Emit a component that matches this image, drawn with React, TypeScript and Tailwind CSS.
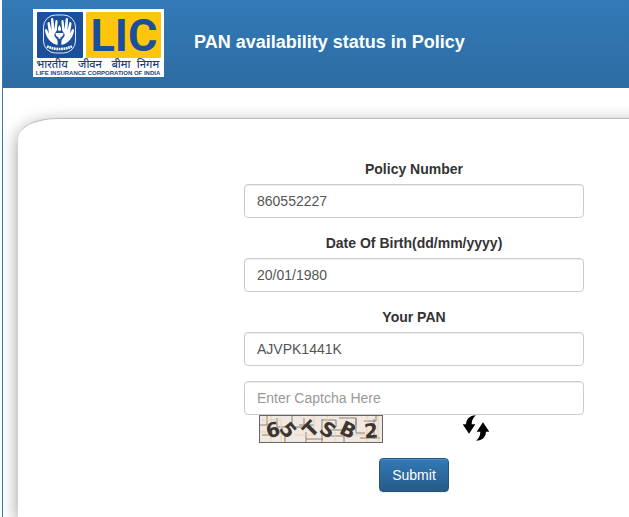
import { clsx } from "clsx";
import { InputHTMLAttributes } from "react";

const sans = "font-['Liberation_Sans',Arial,sans-serif]";

const hindiWords = [
  { word: "भारतीय", x: 19 },
  { word: "जीवन", x: 57 },
  { word: "बीमा", x: 88 },
  { word: "निगम", x: 115 },
];

function LicLogo() {
  return (
    <svg
      viewBox="0 0 131 68"
      className="h-[68px] w-[131px] shrink-0"
      role="img"
      aria-label="LIC">
      <rect width="131" height="68" fill="#fff" />
      {/* Emblem */}
      <rect x="4" y="3" width="46" height="46" rx="1" fill="#1b4f9c" />
      <rect
        x="10.500"
        y="6"
        width="32"
        height="38"
        rx="12"
        fill="#1b4f9c"
        stroke="#dfe8f5"
      />
      <g fill="#fff">
        <path d="M24.500 36C18 34.500 13 29 12 21.500c0-2 1.800-2 2.300-.3l1.700 3.500-1.500-10c0-2 2-2.200 2.400-.3l1.600 7-.5-11c0-2 2.200-2 2.400 0l1 10 1-8c.3-2 2.200-1.800 2.200.2l-.8 8.900-2.300 3.500c-.5 2 .5 3 1.500 4 1.500 1.500 2 4 1.500 7z" />
        <path d="M28.500 36C35 34.500 40 29 41 21.500c0-2-1.800-2-2.300-.3L37 24.700l1.500-10c0-2-2-2.200-2.400-.3l-1.600 7 .5-11c0-2-2.200-2-2.400 0l-1 10-1-8c-.3-2-2.200-1.800-2.200.2l.8 8.900 2.300 3.500c.5 2-.5 3-1.500 4-1.500 1.500-2 4-1.500 7z" />
        <path d="M22.500 24h8c0 2.500-1.500 3.800-3 4.200v1.500h-2v-1.500c-1.500-.4-3-1.700-3-4.200z" />
      </g>
      <path
        d="M26.500 16c1.600 2.500 2 3.800 1.500 5-.6 1.200-2.500 1.200-3 0-.5-1.200-.1-2.500 1.500-5z"
        fill="#fff"
      />
      <path
        d="M14 37.500q12.500 5 25 0"
        fill="none"
        stroke="#fff"
        strokeWidth="2.600"
        strokeDasharray="1.800 .6"
      />
      {/* Wordmark */}
      <rect x="53" y="3" width="75" height="46" rx="1" fill="#fdc60b" />
      <text
        x="91"
        y="42"
        textAnchor="middle"
        fill="#1b4f9c"
        className="font-['Roboto','Liberation_Sans',sans-serif] text-[45px] font-bold">
        LIC
      </text>
      {hindiWords.map(({ word, x }) => (
        <text
          key={word}
          x={x}
          y="59"
          textAnchor="middle"
          fill="#1b3f7f"
          className="font-['Noto_Sans',sans-serif] text-[11px] font-medium">
          {word}
        </text>
      ))}
      <text
        x="65"
        y="66"
        textAnchor="middle"
        fill="#1b3f7f"
        className="font-['Liberation_Sans',Arial,sans-serif] text-[6px] font-bold">
        LIFE INSURANCE CORPORATION OF INDIA
      </text>
    </svg>
  );
}

const captchaChars = [
  { char: "6", x: 14, y: 15, angle: -15 },
  { char: "5", x: 29, y: 15, angle: 50 },
  { char: "T", x: 52, y: 14, angle: -45 },
  { char: "S", x: 69, y: 15, angle: 35 },
  { char: "B", x: 89, y: 15, angle: 25 },
  { char: "2", x: 112, y: 16, angle: -5 },
];

function Captcha() {
  return (
    <svg
      viewBox="0 0 124 28"
      className="h-7 w-[124px]"
      role="img"
      aria-label="Captcha">
      <rect width="124" height="28" fill="#f1e9e1" />
      <path
        d="M8 0v10H0M18 3v9h9M26 20v8M33 0v12h12V3M40 10h15M47 17v11M47 24h17M63 4v24M63 5h14v7M70 15h20M80 3h17v7M97 3v15h9M105 6h12V0M101 23h20M115 4v20M72 21h13v7M3 20h15"
        fill="none"
        stroke="#8c8279"
      />
      <path
        d="M3 5h20M12 0v28M22 6v20M36 20h22M55 0v17M68 0v10M76 17v11M88 20h22M108 0v28M119 0v28M0 17h26"
        fill="none"
        stroke="#e9cfb2"
      />
      <g
        fill="#3d3631"
        textAnchor="middle"
        className="font-['DejaVu_Sans','Liberation_Sans',sans-serif] text-[20px] font-bold">
        {captchaChars.map(({ char, x, y, angle }) => (
          <text
            key={char}
            dominantBaseline="central"
            transform={`translate(${x} ${y}) rotate(${angle})`}>
            {char}
          </text>
        ))}
      </g>
      <rect x=".5" y=".5" width="123" height="27" fill="none" stroke="#6b635d" />
    </svg>
  );
}

function RefreshIcon() {
  const arrow =
    "M39 0C24 0 10 8 9 27H-1l19 28 19-28H26C26 16 31 6 39 0z";
  return (
    <svg viewBox="0 0 78 76" className="size-[26px]" fill="#000">
      <path d={arrow} />
      <path d={arrow} transform="rotate(180 39 38)" />
    </svg>
  );
}

const inputClass =
  "block h-[34px] w-full rounded border border-[#ccc] bg-white px-3 text-sm text-[#555] shadow-[inset_0_1px_1px_rgba(0,0,0,0.075)] placeholder:text-[#999]";

type FieldProps = InputHTMLAttributes<HTMLInputElement> & {
  id: string;
  label: string;
};

function Field({ id, label, ...props }: FieldProps) {
  return (
    <div>
      <label
        htmlFor={id}
        className="mb-[5px] block text-center text-sm font-bold text-[#333]">
        {label}
      </label>
      <input id={id} type="text" className={inputClass} {...props} />
    </div>
  );
}

export default function App() {
  return (
    <div className={clsx("min-h-screen overflow-hidden bg-white pl-0.5", sans)}>
      <div className="flex min-h-screen flex-col border-l border-[#337ab7]">
        <header className="flex h-22 items-start gap-[30px] bg-linear-to-b from-[#337ab7] to-[#2d6ca2] pt-[9px] pl-[30px]">
          <LicLogo />
          <h1 className="pt-[19px] text-lg font-bold text-white">
            PAN availability status in Policy
          </h1>
        </header>

        <main className="mt-[30px] -mr-10 ml-[15px] grow rounded-tl-[40px_20px] border-t border-[#bbb] bg-white pt-10 pr-16 pl-[226px] shadow-[0_5px_18px_rgba(0,0,0,0.4)]">
          <form
            className="flex max-w-[340px] flex-col gap-[15px]"
            onSubmit={(e) => e.preventDefault()}>
            <Field id="policy" label="Policy Number" defaultValue="860552227" />
            <Field
              id="dob"
              label="Date Of Birth(dd/mm/yyyy)"
              defaultValue="20/01/1980"
            />
            <Field id="pan" label="Your PAN" defaultValue="AJVPK1441K" />
            <div>
              <input
                type="text"
                aria-label="Captcha"
                placeholder="Enter Captcha Here"
                className={inputClass}
              />
              <div className="flex items-start gap-20 pl-[15px]">
                <Captcha />
                <button type="button" aria-label="Refresh captcha">
                  <RefreshIcon />
                </button>
              </div>
            </div>
            <button
              type="submit"
              className="h-[34px] self-center rounded border border-[#245580] bg-linear-to-b from-[#337ab7] to-[#265a88] px-3 text-sm text-white shadow-[inset_0_1px_0_rgba(255,255,255,0.15),0_1px_1px_rgba(0,0,0,0.075)]">
              Submit
            </button>
          </form>
        </main>
      </div>
    </div>
  );
}
